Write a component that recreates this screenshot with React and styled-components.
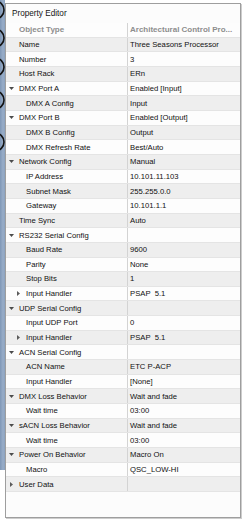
import React from "react";
import styled, { createGlobalStyle } from "styled-components";

const GlobalStyle = createGlobalStyle`
  html, body { margin: 0; padding: 0; background: #ffffff; }
  body { font-family: "Liberation Sans", Arial, sans-serif; }
  * { box-sizing: border-box; }
`;

const Screen = styled.div`
  width: 247px;
  height: 524px;
  display: flex;
  align-items: flex-start;
  overflow: hidden;
  background: #ffffff;
`;

const Backdrop = styled.div`
  width: 5px;
  height: 470px;
  flex: none;
  background: linear-gradient(to right, #7f97b6 0, #98adc8 60%, #8aa1bf 100%);
  overflow: hidden;
`;

const Panel = styled.div`
  margin-top: 3px;
  width: 236px;
  height: 515px;
  flex: none;
  border: 1px solid #9e9e9e;
  box-shadow: 1px 1px 0 #cdcdcd;
  background: #fcfcfc;
  display: flex;
  flex-direction: column;
`;

const TitleBar = styled.div`
  height: 19px;
  flex: none;
  display: flex;
  align-items: center;
  padding-left: 6px;
  font-size: 8.2px;
  color: #151515;
`;

const Grid = styled.div`
  display: flex;
  flex-direction: column;
  flex: 1;
`;

const Row = styled.div`
  height: 14.67px;
  flex: none;
  display: grid;
  grid-template-columns: 122px 1fr;
  background: ${(p) => (p.$shade ? "#eeeeee" : "#fdfdfd")};
  border-bottom: 1px solid #e4e4e4;
  font-size: ${(p) => (p.$header ? "8px" : "7.7px")};
  font-weight: ${(p) => (p.$header ? "bold" : "normal")};
  color: ${(p) => (p.$header ? "#8d8d8d" : "#111111")};
`;

const LabelCell = styled.div`
  display: flex;
  align-items: center;
  padding-left: ${(p) => 3 + p.$level * 7}px;
  border-right: 1px solid #d3d3d3;
  white-space: nowrap;
  overflow: hidden;
`;

const ToggleSlot = styled.span`
  width: 10px;
  flex: none;
  display: flex;
  align-items: center;
  padding-left: ${(p) => (p.$closed ? "1px" : "0")};
`;

const ValueCell = styled.div`
  display: flex;
  align-items: center;
  padding-left: 2px;
  white-space: pre;
  overflow: hidden;
`;

const Filler = styled.div`
  flex: 1;
  background: #fcfcfc;
`;

const Toggle = ({ state }) => {
  if (state === "open")
    return (
      <ToggleSlot>
        <svg width="5" height="3" viewBox="0 0 5 3">
          <polygon points="0,0 5,0 2.5,3" fill="#4b4b4b" />
        </svg>
      </ToggleSlot>
    );
  if (state === "closed")
    return (
      <ToggleSlot $closed>
        <svg width="3" height="5" viewBox="0 0 3 5">
          <polygon points="0,0 3,2.5 0,5" fill="#5a5a5a" />
        </svg>
      </ToggleSlot>
    );
  return <ToggleSlot />;
};

const rows = [
  { label: "Name", value: "Three Seasons Processor" },
  { label: "Number", value: "3" },
  { label: "Host Rack", value: "ERn" },
  { label: "DMX Port A", value: "Enabled [Input]", toggle: "open" },
  { label: "DMX A Config", value: "Input", level: 1 },
  { label: "DMX Port B", value: "Enabled [Output]", toggle: "open" },
  { label: "DMX B Config", value: "Output", level: 1 },
  { label: "DMX Refresh Rate", value: "Best/Auto", level: 1 },
  { label: "Network Config", value: "Manual", toggle: "open" },
  { label: "IP Address", value: "10.101.11.103", level: 1 },
  { label: "Subnet Mask", value: "255.255.0.0", level: 1 },
  { label: "Gateway", value: "10.101.1.1", level: 1 },
  { label: "Time Sync", value: "Auto" },
  { label: "RS232 Serial Config", value: "", toggle: "open" },
  { label: "Baud Rate", value: "9600", level: 1 },
  { label: "Parity", value: "None", level: 1 },
  { label: "Stop Bits", value: "1", level: 1 },
  { label: "Input Handler", value: "PSAP  5.1", level: 1, toggle: "closed" },
  { label: "UDP Serial Config", value: "", toggle: "open" },
  { label: "Input UDP Port", value: "0", level: 1 },
  { label: "Input Handler", value: "PSAP  5.1", level: 1, toggle: "closed" },
  { label: "ACN Serial Config", value: "", toggle: "open" },
  { label: "ACN Name", value: "ETC P-ACP", level: 1 },
  { label: "Input Handler", value: "[None]", level: 1 },
  { label: "DMX Loss Behavior", value: "Wait and fade", toggle: "open" },
  { label: "Wait time", value: "03:00", level: 1 },
  { label: "sACN Loss Behavior", value: "Wait and fade", toggle: "open" },
  { label: "Wait time", value: "03:00", level: 1 },
  { label: "Power On Behavior", value: "Macro On", toggle: "open" },
  { label: "Macro", value: "QSC_LOW-HI", level: 1 },
  { label: "User Data", value: "", toggle: "closed" },
];

const arcs = [10, 38, 67, 100, 142];

export default function App() {
  return (
    <>
      <GlobalStyle />
      <Screen>
        <Backdrop>
          <svg width="5" height="470" viewBox="0 0 5 470">
            {arcs.map((cy) => (
              <circle key={cy} cx="-5" cy={cy} r="9" fill="none" stroke="#111" strokeWidth="1.6" />
            ))}
          </svg>
        </Backdrop>
        <Panel>
          <TitleBar>Property Editor</TitleBar>
          <Grid>
            <Row $header>
              <LabelCell $level={0}>
                <Toggle />
                Object Type
              </LabelCell>
              <ValueCell>Architectural Control Pro...</ValueCell>
            </Row>
            {rows.map((r, i) => (
              <Row key={i} $shade={i % 2 === 0}>
                <LabelCell $level={r.level || 0}>
                  <Toggle state={r.toggle} />
                  {r.label}
                </LabelCell>
                <ValueCell>{r.value}</ValueCell>
              </Row>
            ))}
            <Filler />
          </Grid>
        </Panel>
      </Screen>
    </>
  );
}
